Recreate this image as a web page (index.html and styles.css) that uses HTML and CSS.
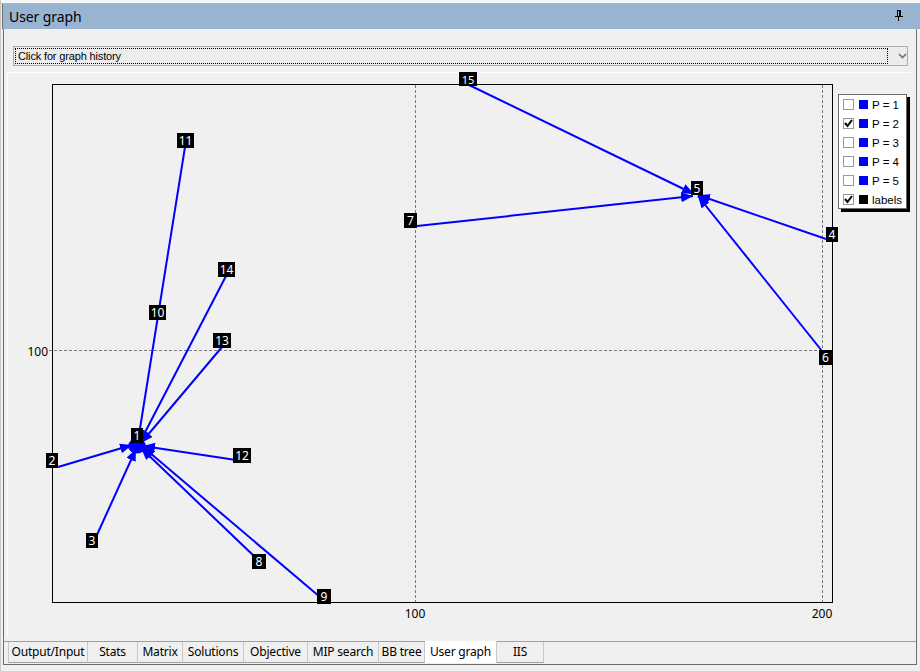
FILE: index.html
```html
<!DOCTYPE html>
<html>
<head>
<meta charset="utf-8">
<title>User graph</title>
<link rel="stylesheet" href="styles.css">
</head>
<body>
<div class="window">
  <div class="topstrip"></div>
  <div class="titlebar">
    <span class="title">User graph</span>
    <svg class="pin" width="8" height="11" viewBox="0 0 8 11">
      <rect x="2.5" y="0.5" width="3" height="6" fill="none" stroke="#000"/>
      <line x1="4.5" y1="1" x2="4.5" y2="6" stroke="#000"/>
      <line x1="0" y1="6.5" x2="8" y2="6.5" stroke="#000"/>
      <line x1="3.5" y1="7" x2="3.5" y2="11" stroke="#000"/>
    </svg>
  </div>
  <div class="frame">
    <div class="combo">
      <div class="combo-focus">Click for graph history</div>
      <svg class="combo-arrow" width="9" height="6" viewBox="0 0 9 6">
        <path d="M1 1 L4.5 4.5 L8 1" fill="none" stroke="#707070" stroke-width="1.6"/>
      </svg>
    </div>
    <div class="chart">
      <svg class="plot" width="904" height="565" viewBox="7 72 904 565">
        <defs>
          <marker id="ah" viewBox="0 0 12 10" refX="12" refY="5" markerWidth="12" markerHeight="10" markerUnits="userSpaceOnUse" orient="auto">
            <path d="M0 0 L12 5 L0 10 z" fill="#0000ff"/>
          </marker>
        </defs>
        <rect x="52.5" y="84.5" width="780" height="518" fill="none" stroke="#000"/>
        <g class="grid">
          <line x1="415.5" y1="85" x2="415.5" y2="602"/>
          <line x1="822.5" y1="85" x2="822.5" y2="602"/>
          <line x1="49" y1="350.5" x2="832" y2="350.5"/>
        </g>
        <g class="ticks">
          <text x="415" y="618" text-anchor="middle">100</text>
          <text x="822" y="618" text-anchor="middle">200</text>
          <text x="48" y="356" text-anchor="end">100</text>
        </g>
        <g class="edges">
          <line x1="185" y1="147" x2="138" y2="441"/>
          <line x1="226" y1="276" x2="140" y2="442"/>
          <line x1="222" y1="347" x2="141" y2="443"/>
          <line x1="236" y1="460" x2="143" y2="446"/>
          <line x1="58" y1="467" x2="132" y2="445"/>
          <line x1="96" y1="537" x2="136" y2="449"/>
          <line x1="256" y1="558" x2="141" y2="448"/>
          <line x1="320" y1="597" x2="143" y2="447"/>
          <line x1="467" y1="84" x2="694" y2="194"/>
          <line x1="417" y1="226" x2="693" y2="196"/>
          <line x1="826" y1="239" x2="698" y2="195"/>
          <line x1="826" y1="356" x2="698" y2="196"/>
        </g>
        <ellipse cx="137" cy="446" rx="9" ry="7.5" fill="#0000ff"/>
        <g class="labels">
          <rect x="131" y="428" width="12" height="15"/><text x="137" y="440">1</text>
          <rect x="46" y="453" width="12" height="15"/><text x="52" y="465">2</text>
          <rect x="86" y="533" width="12" height="15"/><text x="92" y="545">3</text>
          <rect x="826" y="227" width="12" height="15"/><text x="832" y="239">4</text>
          <rect x="691" y="181" width="12" height="14"/><text x="697" y="193">5</text>
          <rect x="819" y="350" width="13" height="15"/><text x="825.5" y="362">6</text>
          <rect x="404" y="213" width="13" height="15"/><text x="410.5" y="225">7</text>
          <rect x="252" y="554" width="14" height="15"/><text x="259" y="566">8</text>
          <rect x="317" y="589" width="14" height="15"/><text x="324" y="601">9</text>
          <rect x="149" y="305" width="17" height="15"/><text x="157.5" y="317">10</text>
          <rect x="177" y="133" width="17" height="15"/><text x="185.5" y="145">11</text>
          <rect x="233" y="448" width="18" height="15"/><text x="242" y="460">12</text>
          <rect x="213" y="333" width="18" height="15"/><text x="222" y="345">13</text>
          <rect x="218" y="262" width="17" height="15"/><text x="226.5" y="274">14</text>
          <rect x="459" y="72" width="18" height="14"/><text class="lbl-top" x="468" y="84">15</text>
        </g>
      </svg>
      <div class="legend">
        <div class="lg-row"><span class="cb"></span><span class="sw"></span><span class="lt">P = 1</span></div>
        <div class="lg-row"><span class="cb"><svg width="9" height="9" viewBox="0 0 9 9"><path d="M1 4 L3.5 7 L8 1" fill="none" stroke="#000" stroke-width="2"/></svg></span><span class="sw"></span><span class="lt">P = 2</span></div>
        <div class="lg-row"><span class="cb"></span><span class="sw"></span><span class="lt">P = 3</span></div>
        <div class="lg-row"><span class="cb"></span><span class="sw"></span><span class="lt">P = 4</span></div>
        <div class="lg-row"><span class="cb"></span><span class="sw"></span><span class="lt">P = 5</span></div>
        <div class="lg-row"><span class="cb"><svg width="9" height="9" viewBox="0 0 9 9"><path d="M1 4 L3.5 7 L8 1" fill="none" stroke="#000" stroke-width="2"/></svg></span><span class="sw sw-black"></span><span class="lt">labels</span></div>
      </div>
    </div>
    <div class="tabs">
      <div class="tab t1">Output/Input</div>
      <div class="tab t2">Stats</div>
      <div class="tab t3">Matrix</div>
      <div class="tab t4">Solutions</div>
      <div class="tab t5">Objective</div>
      <div class="tab t6">MIP search</div>
      <div class="tab t7">BB tree</div>
      <div class="tab t8 active">User graph</div>
      <div class="tab t9">IIS</div>
    </div>
  </div>
</div>
</body>
</html>
```

FILE: styles.css
```css
* { box-sizing: border-box; }
html, body { margin: 0; padding: 0; }
body {
  width: 920px;
  height: 671px;
  overflow: hidden;
  background: #f0f0f0;
  font-family: "Noto Sans", "Liberation Sans", sans-serif;
}
.window {
  width: 920px;
  height: 671px;
  background: #f0f0f0;
  border-left: 1px solid #c8c8c8;
}
.topstrip {
  height: 4px;
  background: #f7f7f7;
  border-bottom: 1px solid #b4b4b4;
}
.titlebar {
  height: 25px;
  margin-left: 1px;
  background: #99b4d1;
  border-left: 1px solid #6d6d6d;
  display: flex;
  align-items: center;
  justify-content: space-between;
  padding: 0 17px 0 6px;
}
.title {
  font-size: 14px;
  color: #000;
  letter-spacing: -0.1px;
}
.pin { display: block; margin-top: -2px; }
.frame {
  margin-left: 2px;
  width: 914px;
  height: 636px;
  border-left: 1px solid #6d6d6d;
  border-right: 1px solid #6d6d6d;
  border-bottom: 1px solid #6d6d6d;
  padding-top: 17px;
}
.combo {
  margin-left: 9px;
  width: 895px;
  height: 20px;
  border: 1px solid #acacac;
  background: #ececec;
  display: flex;
  align-items: center;
  padding: 1px 0 1px 1px;
}
.combo-focus {
  width: 873px;
  height: 16px;
  border: 1px dotted #000;
  font-family: "Liberation Sans", Arial, sans-serif;
  font-size: 11px;
  line-height: 14px;
  padding-left: 2px;
  color: #000;
  letter-spacing: -0.15px;
}
.combo-arrow { margin-left: 10px; }
.chart {
  position: relative;
  margin-top: 6px;
  margin-left: 3px;
  width: 904px;
  height: 565px;
  background: #f0f0f0;
  border-top: 1px solid #fdfdfd;
  border-left: 1px solid #fdfdfd;
}
.plot {
  position: absolute;
  left: -1px;
  top: -1px;
  display: block;
}
.grid line {
  stroke: #7a7a7a;
  stroke-width: 1;
  stroke-dasharray: 3 2;
}
.ticks text {
  font-family: "Noto Sans", sans-serif;
  font-size: 12px;
  fill: #000;
}
.edges line {
  stroke: #0000ff;
  stroke-width: 2;
  marker-end: url(#ah);
}
.labels rect { fill: #000; }
.labels text {
  font-family: "Noto Sans", sans-serif;
  font-size: 12px;
  fill: #fff;
  text-anchor: middle;
}
.labels .lbl-top { font-size: 11px; }
.legend {
  position: absolute;
  left: 830px;
  top: 21px;
  width: 69px;
  height: 115px;
  background: #fff;
  border: 1px solid #696969;
  box-shadow: 3px 3px 0 #000;
}
.lg-row {
  height: 19px;
  display: flex;
  align-items: center;
  padding-left: 4px;
}
.cb {
  width: 11px;
  height: 11px;
  border: 1px solid #9a9a9a;
  background: #fff;
  display: flex;
  align-items: center;
  justify-content: center;
}
.cb svg { display: block; }
.sw {
  width: 9px;
  height: 9px;
  background: #0000ff;
  margin-left: 5px;
}
.sw-black { background: #000; }
.lt {
  margin-left: 4px;
  font-family: "Liberation Sans", Arial, sans-serif;
  font-size: 11.5px;
  color: #000;
  white-space: nowrap;
}
.tabs {
  margin-top: 4px;
  height: 22px;
  display: flex;
  padding-left: 4px;
  border-top: 1px solid #a0a0a0;
}
.tab {
  height: 21px;
  border-right: 1px solid #c8c8c8;
  border-bottom: 1px solid #a0a0a0;
  font-size: 12px;
  line-height: 20px;
  text-align: center;
  color: #000;
  white-space: nowrap;
  letter-spacing: -0.2px;
}
.t1 { width: 80px; border-left: 1px solid #c8c8c8; }
.t2 { width: 50px; }
.t3 { width: 45px; }
.t4 { width: 61px; }
.t5 { width: 64px; }
.t6 { width: 71px; }
.t7 { width: 46px; }
.t8 { width: 72px; }
.t9 { width: 47px; }
.tab.active {
  background: #fff;
  margin-top: -1px;
  height: 22px;
  line-height: 22px;
  border-bottom: none;
}
```
